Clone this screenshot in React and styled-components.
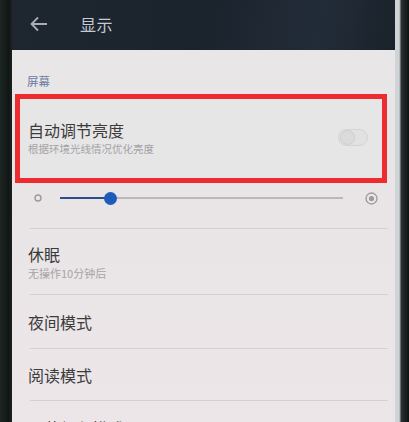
import React from "react";
import styled, { createGlobalStyle } from "styled-components";

const GlobalStyle = createGlobalStyle`
  html, body {
    margin: 0;
    padding: 0;
    width: 409px;
    height: 422px;
    overflow: hidden;
    background: #161c1b;
    font-family: "Noto Sans CJK SC", "Noto Sans", sans-serif;
  }
`;

const Phone = styled.div`
  display: flex;
  width: 409px;
  height: 422px;
  overflow: hidden;
`;

const Bezel = styled.div`
  width: ${({ w }) => w}px;
  flex-shrink: 0;
  background: ${({ side }) =>
    side === "left"
      ? "linear-gradient(90deg, #1d2622 0%, #101614 70%, #1a2220 100%)"
      : "linear-gradient(90deg, #cfd5d6 0%, #cfd5d6 30%, #2a3132 45%, #0d1211 100%)"};
`;

const Screen = styled.div`
  flex: 1;
  display: flex;
  flex-direction: column;
  background: #e9e6e7;
`;

const Header = styled.div`
  height: 50px;
  flex-shrink: 0;
  display: flex;
  align-items: center;
  padding: 0 0 2px 18px;
  box-sizing: border-box;
  background: linear-gradient(100deg, #1e2630 0%, #1b232d 50%, #222c38 80%, #1a222b 100%);
`;

const BackIcon = styled.svg`
  width: 18px;
  height: 16px;
  margin-right: 32px;
`;

const HeaderTitle = styled.div`
  color: #c6cad2;
  font-size: 16px;
  letter-spacing: 0.5px;
`;

const Panel = styled.div`
  flex: 1;
  display: flex;
  flex-direction: column;
  background: linear-gradient(180deg, #e8e6e6 0%, #e9e5e6 40%, #ede6e8 100%);
`;

const SectionLabel = styled.div`
  height: 16px;
  margin: 23px 0 5px 15px;
  font-size: 11.5px;
  line-height: 16px;
  color: #6b7aa4;
`;

const Highlight = styled.div`
  margin: 0 8px 0 3px;
  height: 89px;
  box-sizing: border-box;
  border: 5px solid #ee2b2f;
  display: flex;
  align-items: center;
  justify-content: space-between;
  padding: 0 14px 2px 8px;
  background: #e7e6e6;
`;

const TextBlock = styled.div`
  display: flex;
  flex-direction: column;
`;

const Title = styled.div`
  font-size: 16px;
  line-height: 20px;
  color: #3b3b3d;
`;

const Subtitle = styled.div`
  font-size: ${({ small }) => (small ? "10.5px" : "11px")};
  line-height: 14px;
  margin-top: 2px;
  color: #a5a3a6;
`;

const Toggle = styled.div`
  width: 30px;
  height: 17px;
  border-radius: 9px;
  background: #e2e1e1;
  border: 1px solid #d5d4d5;
  display: flex;
  align-items: center;
  padding: 0 1px;
  box-sizing: border-box;
`;

const Knob = styled.div`
  width: 15px;
  height: 15px;
  border-radius: 50%;
  background: #dcdbdb;
  border: 1px solid #cfcecf;
  box-sizing: border-box;
`;

const SliderRow = styled.div`
  height: 30px;
  display: flex;
  align-items: center;
  padding: 0 17px 0 22px;
  margin-bottom: 15px;
`;

const Track = styled.div`
  flex: 1;
  height: 2px;
  margin: 0 22px 0 18px;
  background: #b9b8bd;
  position: relative;
  display: flex;
  align-items: center;
`;

const Filled = styled.div`
  height: 2px;
  background: #2a4f8f;
`;

const Thumb = styled.div`
  position: absolute;
  width: 13px;
  height: 13px;
  border-radius: 50%;
  background: #1c5dbb;
  transform: translateX(-6px);
`;

const Item = styled.div`
  height: ${({ h }) => h}px;
  flex-shrink: 0;
  display: flex;
  flex-direction: column;
  justify-content: center;
  border-top: 1px solid #d3d0d2;
  margin: 0 7px 0 18px;
  box-sizing: border-box;
  & > * {
    margin-left: -2px;
  }
`;

export default function App() {
  const value = 0.175;
  return (
    <>
      <GlobalStyle />
      <Phone>
        <Bezel side="left" w={12} />
        <Screen>
          <Header>
            <BackIcon viewBox="0 0 18 16">
              <path
                d="M17 8H2M8 1.5L1.5 8L8 14.5"
                fill="none"
                stroke="#a9adb5"
                strokeWidth="1.8"
              />
            </BackIcon>
            <HeaderTitle>显示</HeaderTitle>
          </Header>
          <Panel>
            <SectionLabel>屏幕</SectionLabel>
            <Highlight>
              <TextBlock>
                <Title>自动调节亮度</Title>
                <Subtitle small>根据环境光线情况优化亮度</Subtitle>
              </TextBlock>
              <Toggle>
                <Knob />
              </Toggle>
            </Highlight>
            <SliderRow>
              <svg width="8" height="8" viewBox="0 0 8 8">
                <circle cx="4" cy="4" r="3" fill="none" stroke="#9c9a9e" strokeWidth="1.4" />
              </svg>
              <Track>
                <Filled style={{ width: `${value * 100}%` }} />
                <Thumb style={{ left: `${value * 100}%` }} />
              </Track>
              <svg width="13" height="13" viewBox="0 0 13 13">
                <circle cx="6.5" cy="6.5" r="5.5" fill="none" stroke="#9c9a9e" strokeWidth="1.3" />
                <circle cx="6.5" cy="6.5" r="2.6" fill="#9c9a9e" />
              </svg>
            </SliderRow>
            <Item h={66}>
              <Title>休眠</Title>
              <Subtitle>无操作10分钟后</Subtitle>
            </Item>
            <Item h={54}>
              <Title>夜间模式</Title>
            </Item>
            <Item h={52}>
              <Title>阅读模式</Title>
            </Item>
            <Item h={54}>
              <Title>屏幕颜色模式</Title>
            </Item>
          </Panel>
        </Screen>
        <Bezel side="right" w={14} />
      </Phone>
    </>
  );
}
